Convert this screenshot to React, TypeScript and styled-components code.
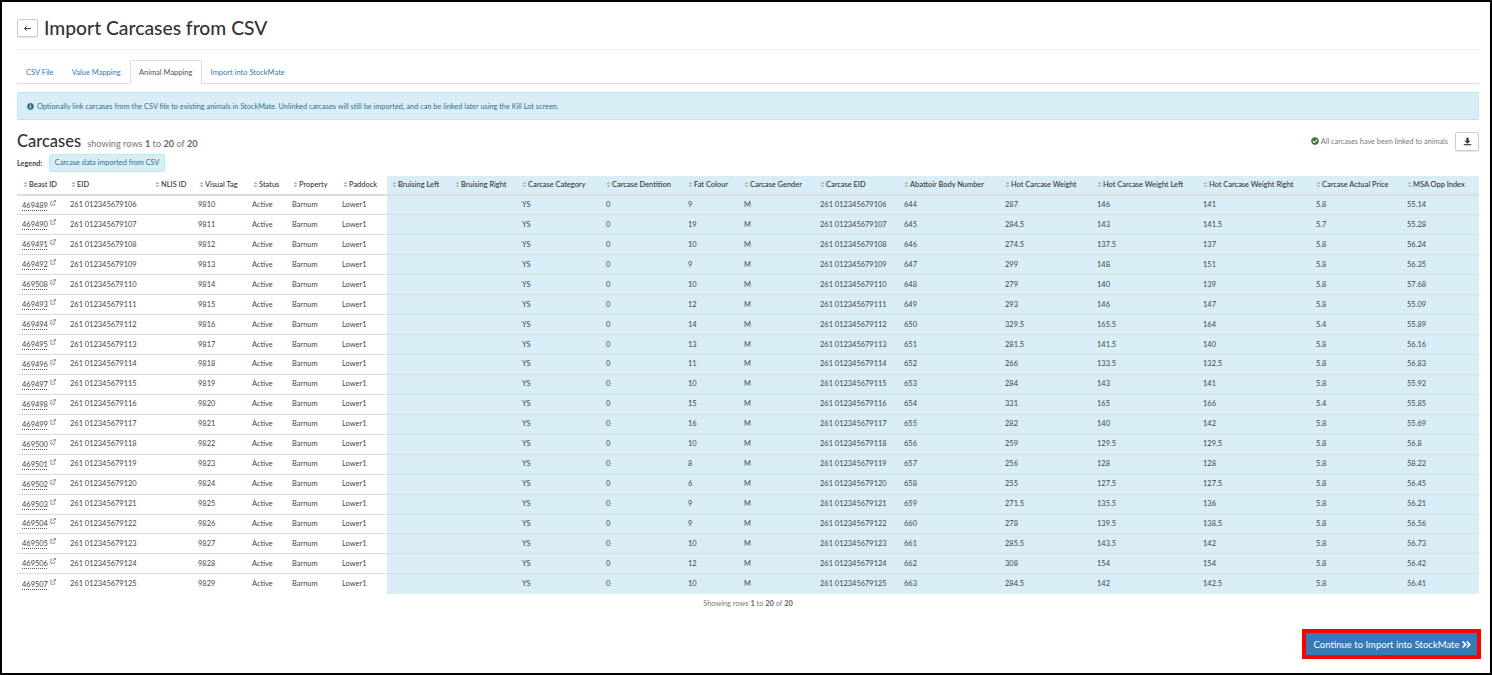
import React from "react";
import styled, { createGlobalStyle } from "styled-components";
import { FaInfoCircle, FaCheckCircle, FaAngleDoubleRight, FaSort } from "react-icons/fa";

const Global = createGlobalStyle`
  html, body { margin: 0; padding: 0; background: #fff; }
  body { font-family: Lato, "Open Sans", sans-serif; color: #333; }
  * { box-sizing: border-box; }
`;

const Page = styled.div`
  width: 1492px;
  height: 675px;
  border: 2px solid #000;
  padding: 0 11px 0 15px;
  display: flex;
  flex-direction: column;
  overflow: hidden;
`;

const TitleBar = styled.div`
  height: 48px;
  display: flex;
  align-items: center;
  gap: 6px;
  padding-top: 5px;
  border-bottom: 1px solid #eee;
`;

const BackButton = styled.button`
  width: 21px;
  height: 18px;
  padding: 0;
  display: flex;
  align-items: center;
  justify-content: center;
  background: #fff;
  border: 1px solid #ccc;
  border-radius: 2px;
  box-shadow: 0 1px 1px rgba(0, 0, 0, 0.1);
  color: #333;
`;

const Title = styled.h1`
  margin: 0;
  font-size: 19.3px;
  font-weight: 500;
  line-height: 24px;
  color: #333;
`;

const Tabs = styled.div`
  display: flex;
  margin-top: 10px;
  height: 24px;
  border-bottom: 1px solid #ddd;
`;

const Tab = styled.div<{ $active?: boolean }>`
  height: ${(p) => (p.$active ? "24px" : "23px")};
  padding: 0 8.1px;
  font-size: 7.5px;
  line-height: 23px;
  color: ${(p) => (p.$active ? "#555" : "#337ab7")};
  background: #fff;
  border: 1px solid ${(p) => (p.$active ? "#ddd" : "transparent")};
  border-bottom: none;
  border-radius: 2px 2px 0 0;
`;

const Alert = styled.div`
  margin-top: 8px;
  height: 28px;
  display: flex;
  align-items: center;
  gap: 3px;
  padding-left: 9px;
  background: #d9edf7;
  border: 1px solid #bce8f1;
  border-radius: 2px;
  font-size: 7.35px;
  color: #31708f;
`;

const SectionHead = styled.div`
  margin-top: 8px;
  height: 26px;
  display: flex;
  align-items: center;
  justify-content: space-between;
`;

const Heading = styled.div`
  display: flex;
  align-items: baseline;
  gap: 6px;
`;

const SectionTitle = styled.span`
  font-size: 16.5px;
  font-weight: 500;
  color: #333;
`;

const SubTitle = styled.span`
  font-size: 9.2px;
  color: #777;
  b { font-weight: 700; color: #666; }
`;

const Status = styled.div`
  display: flex;
  align-items: center;
  gap: 7px;
`;

const Linked = styled.span`
  display: flex;
  align-items: center;
  gap: 2px;
  font-size: 7.3px;
  color: #6f7f6f;
  svg { color: #3c763d; }
`;

const IconButton = styled.button`
  width: 24px;
  height: 19px;
  padding: 0;
  display: flex;
  align-items: center;
  justify-content: center;
  background: #fff;
  border: 1px solid #ccc;
  border-radius: 2px;
  box-shadow: 0 1px 1px rgba(0, 0, 0, 0.1);
  color: #333;
`;

const Legend = styled.div`
  display: flex;
  align-items: center;
  gap: 6.5px;
  height: 18px;
  font-size: 7.3px;
  font-weight: 700;
  color: #444;
`;

const LegendChip = styled.span`
  height: 18px;
  padding: 0 5px;
  font-size: 7.3px;
  line-height: 16px;
  font-weight: 400;
  color: #31708f;
  background: #d9edf7;
  border: 1px solid #bce8f1;
  border-radius: 2px;
`;

const Table = styled.table`
  margin-top: 4px;
  width: 1462px;
  table-layout: fixed;
  border-collapse: collapse;
  font-size: 7.45px;
`;

const Th = styled.th<{ $csv?: boolean }>`
  height: 19px;
  padding: 0 0 1px ${(p) => (p.$csv ? 4 : 5)}px;
  text-align: left;
  font-weight: 500;
  white-space: nowrap;
  color: #333;
  background: ${(p) => (p.$csv ? "#d9edf7" : "#fff")};
  border-bottom: 2px solid #ddd;
  svg { color: #bbb; vertical-align: -1px; }
`;

const Td = styled.td<{ $csv?: boolean }>`
  height: 19.95px;
  padding: 0 0 1px 5px;
  white-space: nowrap;
  color: #444;
  background: ${(p) => (p.$csv ? "#d9edf7" : "#fff")};
  border-top: 1px solid #ddd;
`;

const BeastLink = styled.a`
  color: #444;
  text-decoration: underline dotted #555;
  text-underline-offset: 2px;
`;

const LinkIcon = styled.svg`
  width: 6px;
  height: 6px;
  margin-left: 2px;
  vertical-align: 2px;
`;

const Foot = styled.div`
  margin-top: 5px;
  text-align: center;
  font-size: 7.4px;
  color: #777;
  b { font-weight: 700; color: #666; }
`;

const Actions = styled.div`
  display: flex;
  justify-content: flex-end;
  margin-top: 21px;
  margin-right: -2px;
`;

const ContinueButton = styled.button`
  width: 179px;
  height: 30px;
  display: flex;
  align-items: center;
  justify-content: center;
  gap: 2px;
  padding: 1px 0 0 3px;
  background: #337ab7;
  border: 4px solid #f00;
  color: #fff;
  font-family: inherit;
  font-size: 9.5px;
  svg { margin-top: 1px; }
`;

const cols = [48, 84, 44, 54, 40, 50, 50, 63, 67, 84, 82, 56, 76, 84, 101, 92, 106, 113, 91, 77];

const headers = [
  "Beast ID", "EID", "NLIS ID", "Visual Tag", "Status", "Property", "Paddock",
  "Bruising Left", "Bruising Right", "Carcase Category", "Carcase Dentition", "Fat Colour",
  "Carcase Gender", "Carcase EID", "Abattoir Body Number", "Hot Carcase Weight",
  "Hot Carcase Weight Left", "Hot Carcase Weight Right", "Carcase Actual Price", "MSA Opp Index",
];

const beast = [469489,469490,469491,469492,469508,469493,469494,469495,469496,469497,469498,469499,469500,469501,469502,469503,469504,469505,469506,469507];
const fat = [9,19,10,9,10,12,14,13,11,10,15,16,10,8,6,9,9,10,12,10];
const hot = [287,284.5,274.5,299,279,293,329.5,281.5,266,284,331,282,259,256,255,271.5,278,285.5,308,284.5];
const left = [146,143,137.5,148,140,146,165.5,141.5,133.5,143,165,140,129.5,128,127.5,135.5,139.5,143.5,154,142];
const right = [141,141.5,137,151,139,147,164,140,132.5,141,166,142,129.5,128,127.5,136,138.5,142,154,142.5];
const price = [5.8,5.7,5.8,5.8,5.8,5.8,5.4,5.8,5.8,5.8,5.4,5.8,5.8,5.8,5.8,5.8,5.8,5.8,5.8,5.8];
const msa = [55.14,55.28,56.24,56.35,57.68,55.09,55.89,56.16,56.83,55.92,55.85,55.69,56.8,58.22,56.45,56.21,56.56,56.73,56.42,56.41];

const ExternalLink = () => (
  <LinkIcon viewBox="0 0 12 12" fill="none" stroke="#666" strokeWidth="1.3">
    <path d="M9.5 7v3.5h-8v-8H5" />
    <path d="M5 7l6-6M7.5 1H11v3.5" />
  </LinkIcon>
);

export default function App() {
  return (
    <Page>
      <Global />
      <TitleBar>
        <BackButton aria-label="Back">
          <svg width="9" height="9" viewBox="0 0 12 12" fill="none" stroke="#333" strokeWidth="1.3">
            <path d="M10.5 6H2M5 3L2 6l3 3" />
          </svg>
        </BackButton>
        <Title>Import Carcases from CSV</Title>
      </TitleBar>
      <Tabs>
        <Tab>CSV File</Tab>
        <Tab>Value Mapping</Tab>
        <Tab $active>Animal Mapping</Tab>
        <Tab>Import into StockMate</Tab>
      </Tabs>
      <Alert>
        <FaInfoCircle size={7} />
        Optionally link carcases from the CSV file to existing animals in StockMate. Unlinked carcases will still be imported, and can be linked later using the Kill Lot screen.
      </Alert>
      <SectionHead>
        <Heading>
          <SectionTitle>Carcases</SectionTitle>
          <SubTitle>showing rows <b>1</b> to <b>20</b> of <b>20</b></SubTitle>
        </Heading>
        <Status>
          <Linked><FaCheckCircle size={8} /> All carcases have been linked to animals</Linked>
          <IconButton aria-label="Download">
            <svg width="9" height="9" viewBox="0 0 12 12" fill="#333">
              <path d="M4.5 1h3v4H10L6 9 2 5h2.5z" />
              <path d="M1 9.5h10V11H1z" />
            </svg>
          </IconButton>
        </Status>
      </SectionHead>
      <Legend>
        Legend:
        <LegendChip>Carcase data imported from CSV</LegendChip>
      </Legend>
      <Table>
        <colgroup>
          {cols.map((w, i) => <col key={i} style={{ width: w }} />)}
        </colgroup>
        <thead>
          <tr>
            {headers.map((h, i) => (
              <Th key={h} $csv={i >= 7}><FaSort size={7} />{h}</Th>
            ))}
          </tr>
        </thead>
        <tbody>
          {beast.map((id, i) => {
            const eid = `261 012345679${106 + i}`;
            const values = ["", "", "YS", "0", fat[i], "M", eid, 644 + i, hot[i], left[i], right[i], price[i], msa[i]];
            return (
              <tr key={id}>
                <Td><BeastLink>{id}</BeastLink><ExternalLink /></Td>
                <Td>{eid}</Td>
                <Td />
                <Td>{9810 + i}</Td>
                <Td>Active</Td>
                <Td>Barnum</Td>
                <Td>Lower1</Td>
                {values.map((v, j) => <Td key={j} $csv>{v}</Td>)}
              </tr>
            );
          })}
        </tbody>
      </Table>
      <Foot>Showing rows <b>1</b> to <b>20</b> of <b>20</b></Foot>
      <Actions>
        <ContinueButton>Continue to Import into StockMate <FaAngleDoubleRight size={11} /></ContinueButton>
      </Actions>
    </Page>
  );
}
